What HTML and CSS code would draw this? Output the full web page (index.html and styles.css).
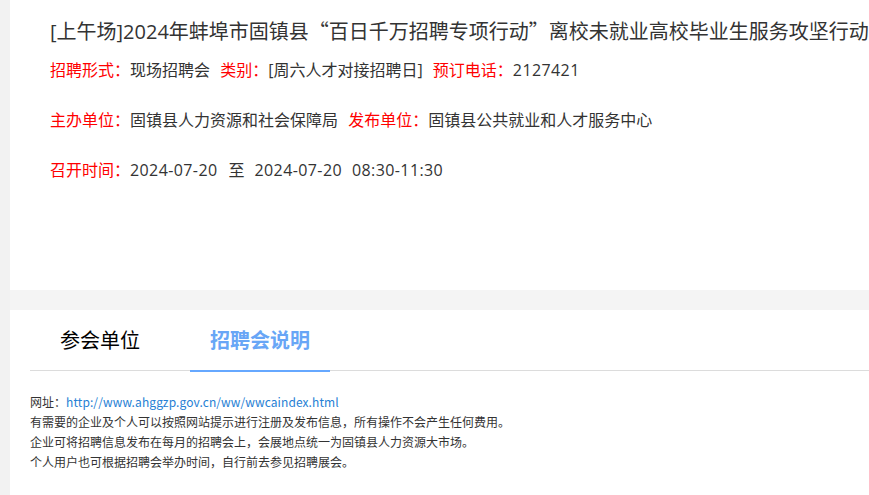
FILE: index.html
```html
<!DOCTYPE html>
<html lang="zh-CN">
<head>
<meta charset="utf-8">
<title>招聘会详情</title>
<link rel="stylesheet" href="styles.css">
</head>
<body>
<div class="page">
  <section class="info">
    <h1 class="title">[上午场]2024年蚌埠市固镇县<span class="q">“</span>百日千万招聘专项行动<span class="q">”</span>离校未就业高校毕业生服务攻坚行动</h1>
    <div class="row">
      <span class="lbl">招聘形式：</span><span class="val">现场招聘会</span>
      <span class="lbl gap">类别：</span><span class="val">[周六人才对接招聘日]</span>
      <span class="lbl gap">预订电话：</span><span class="val num">2127421</span>
    </div>
    <div class="row">
      <span class="lbl">主办单位：</span><span class="val">固镇县人力资源和社会保障局</span>
      <span class="lbl gap">发布单位：</span><span class="val">固镇县公共就业和人才服务中心</span>
    </div>
    <div class="row">
      <span class="lbl">召开时间：</span><span class="val num">2024-07-20</span><span class="val sep">至</span><span class="val num">2024-07-20</span><span class="val num sep2">08:30-11:30</span>
    </div>
  </section>
  <div class="spacer"></div>
  <section class="detail">
    <div class="tabs">
      <div class="tab">参会单位</div>
      <div class="tab active">招聘会说明</div>
    </div>
    <div class="desc">
      <p>网址：<a class="link" href="#">http://www.ahggzp.gov.cn/ww/wwcaindex.html</a></p>
      <p>有需要的企业及个人可以按照网站提示进行注册及发布信息，所有操作不会产生任何费用。</p>
      <p>企业可将招聘信息发布在每月的招聘会上，会展地点统一为固镇县人力资源大市场。</p>
      <p>个人用户也可根据招聘会举办时间，自行前去参见招聘展会。</p>
    </div>
  </section>
</div>
</body>
</html>
```

FILE: styles.css
```css
html, body {
  margin: 0;
  padding: 0;
  height: 100%;
  overflow: hidden;
}
body {
  background: #f2f2f2;
  font-family: "Open Sans", "Noto Sans CJK SC", sans-serif;
  color: #333;
}
.page {
  margin-left: 10px;
  display: flex;
  flex-direction: column;
  height: 100%;
}
.info {
  background: #fff;
  height: 290px;
  box-sizing: border-box;
  padding: 18px 0 0 40px;
  overflow: hidden;
}
.title {
  margin: 0;
  font-size: 20px;
  font-weight: normal;
  line-height: 26px;
  white-space: nowrap;
  color: #333;
}
.q {
  font-family: "Noto Sans CJK SC", sans-serif;
}
.row {
  font-size: 16px;
  line-height: 50px;
  white-space: nowrap;
}
.lbl {
  color: #f00;
}
.lbl.gap {
  margin-left: 6px;
}
.val {
  color: #333;
}
.num {
  letter-spacing: 0.4px;
}
.sep {
  margin: 0 10px 0 11px;
}
.sep2 {
  margin-left: 10px;
}
.spacer {
  height: 20px;
  background: #f4f4f4;
}
.detail {
  flex: 1;
  background: #fff;
  padding-left: 20px;
}
.tabs {
  display: flex;
  gap: 20px;
  border-bottom: 1px solid #dcdcdc;
  height: 60px;
}
.tab {
  width: 140px;
  box-sizing: border-box;
  height: 62px;
  padding-top: 2px;
  line-height: 58px;
  text-align: center;
  font-size: 20px;
  color: #000;
  border-bottom: 2px solid transparent;
}
.tab.active {
  color: #68a6f6;
  font-weight: bold;
  border-bottom-color: #66a8ff;
}
.desc {
  margin-top: 21px;
  font-family: "Noto Sans CJK SC", sans-serif;
  font-size: 12px;
  line-height: 20px;
  color: #333;
}
.desc p {
  margin: 0;
}
.link {
  color: #2680d4;
  text-decoration: none;
  letter-spacing: 0.1px;
}
```
